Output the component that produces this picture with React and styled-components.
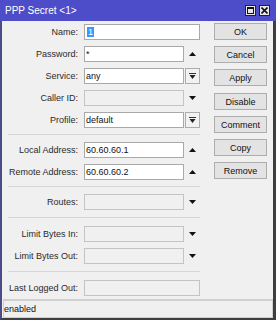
import styled, { createGlobalStyle } from 'styled-components'

const Global = createGlobalStyle`
  html, body {
    margin: 0;
    padding: 0;
    background: #f0f0f0;
  }
  body {
    font-family: "Liberation Sans", Arial, sans-serif;
    font-size: 9px;
    color: #1a1a1a;
  }
  * { box-sizing: border-box; }
`

const Window = styled.div`
  width: 276px;
  height: 320px;
  display: flex;
  flex-direction: column;
  background: #f0f0f0;
  border-left: 2px solid #4b4b8a;
  border-right: 3px solid #3e3e3e;
  border-bottom: 2px solid #3e3e3e;
`

const TitleBar = styled.div`
  height: 21px;
  margin: 0 -3px 0 -2px;
  padding: 0 6px 0 5px;
  background: #4d4dc9;
  color: #fff;
  font-size: 10px;
  display: flex;
  align-items: center;
  justify-content: space-between;
`

const TitleButtons = styled.div`
  display: flex;
  gap: 3px;
`

const TitleButton = styled.div`
  width: 11px;
  height: 11px;
  background: #e8e8e8;
  border: 1px solid #222;
  display: flex;
  align-items: center;
  justify-content: center;
`

const Body = styled.div`
  display: flex;
  flex: 1;
`

const Form = styled.div`
  width: 198px;
  display: flex;
  flex-direction: column;
`

const Row = styled.div`
  height: 22px;
  display: grid;
  grid-template-columns: 76px 116px;
  column-gap: 6px;
  align-items: center;
`

const Label = styled.div`
  text-align: right;
  white-space: nowrap;
  color: #2a2a2a;
`

const Field = styled.div`
  display: flex;
  align-items: center;
  height: 16px;
`

const Input = styled.div`
  flex: 1;
  height: 16px;
  padding: 0 1px;
  line-height: 14px;
  background: ${p => (p.$off ? '#f0f0f0' : '#fff')};
  border: 1px solid ${p => (p.$off ? '#c4c4c4' : '#a9a9a9')};
  color: #111;
  white-space: nowrap;
  overflow: hidden;
`

const Selected = styled.span`
  background: #3399ff;
  color: #fff;
  padding: 0 1px;
  margin-left: 1px;
`

const Trail = styled.div`
  width: 16px;
  height: 16px;
  flex: none;
  display: flex;
  align-items: center;
  justify-content: center;
`

const DropBox = styled.div`
  width: 15px;
  height: 16px;
  margin-left: 1px;
  flex: none;
  border: 1px solid #acacac;
  background: #f2f2f2;
  display: flex;
  align-items: center;
  justify-content: center;
`

const Separator = styled.div`
  height: 1px;
  margin: ${p => p.$m || '3px 0 4px 6px'};
  background: #d6d6d6;
`

const Buttons = styled.div`
  margin-left: 14px;
  padding-top: 2px;
  width: 53px;
  display: flex;
  flex-direction: column;
  gap: 6px;
`

const Button = styled.div`
  height: 17px;
  margin-top: ${p => (p.$gap ? '1px' : '0')};
  background: #e3e3e3;
  border: 1px solid #adadad;
  display: flex;
  align-items: center;
  justify-content: center;
  color: #111;
`

const Status = styled.div`
  height: 19px;
  margin: 0 0 0 1px;
  border: 1px solid #cfcfcf;
  border-top-width: 2px;
  display: flex;
  align-items: center;
  color: #111;
`

const Up = () => (
  <svg width="7" height="4" viewBox="0 0 7 4">
    <polygon points="0,4 7,4 3.5,0" fill="#111" />
  </svg>
)

const Down = () => (
  <svg width="7" height="4" viewBox="0 0 7 4">
    <polygon points="0,0 7,0 3.5,4" fill="#111" />
  </svg>
)

const DropIcon = () => (
  <svg width="7" height="6" viewBox="0 0 7 6">
    <rect x="0" y="0" width="7" height="1" fill="#333" />
    <polygon points="0.5,2 6.5,2 3.5,6" fill="#222" />
  </svg>
)

const FormRow = ({ label, value, off, trail, children }) => (
  <Row>
    <Label>{label}:</Label>
    <Field>
      <Input $off={off}>{children || value}</Input>
      {trail === 'up' && <Trail><Up /></Trail>}
      {trail === 'down' && <Trail><Down /></Trail>}
      {trail === 'drop' && <DropBox><DropIcon /></DropBox>}
    </Field>
  </Row>
)

export default function App() {
  return (
    <>
      <Global />
      <Window>
        <TitleBar>
          <span>PPP Secret &lt;1&gt;</span>
          <TitleButtons>
            <TitleButton>
              <svg width="7" height="7" viewBox="0 0 7 7">
                <rect x="0.5" y="0.5" width="6" height="6" fill="none" stroke="#111" />
                <rect x="0" y="0" width="7" height="2" fill="#111" />
              </svg>
            </TitleButton>
            <TitleButton>
              <svg width="7" height="7" viewBox="0 0 7 7">
                <path d="M0.5 0.5 L6.5 6.5 M6.5 0.5 L0.5 6.5" stroke="#111" strokeWidth="1.6" />
              </svg>
            </TitleButton>
          </TitleButtons>
        </TitleBar>
        <Body>
          <Form>
            <FormRow label="Name"><Selected>1</Selected></FormRow>
            <FormRow label="Password" value="*" trail="up" />
            <FormRow label="Service" value="any" trail="drop" />
            <FormRow label="Caller ID" off trail="down" />
            <FormRow label="Profile" value="default" trail="drop" />
            <Separator />
            <FormRow label="Local Address" value="60.60.60.1" trail="up" />
            <FormRow label="Remote Address" value="60.60.60.2" trail="up" />
            <Separator $m="3px 0 4px 6px" />
            <FormRow label="Routes" off trail="down" />
            <Separator $m="4px 0 5px 6px" />
            <FormRow label="Limit Bytes In" off trail="down" />
            <FormRow label="Limit Bytes Out" off trail="down" />
            <Separator $m="4px 0 5px 6px" />
            <FormRow label="Last Logged Out" off />
          </Form>
          <Buttons>
            <Button>OK</Button>
            <Button>Cancel</Button>
            <Button>Apply</Button>
            <Button $gap>Disable</Button>
            <Button>Comment</Button>
            <Button>Copy</Button>
            <Button>Remove</Button>
          </Buttons>
        </Body>
        <Status>enabled</Status>
      </Window>
    </>
  )
}
